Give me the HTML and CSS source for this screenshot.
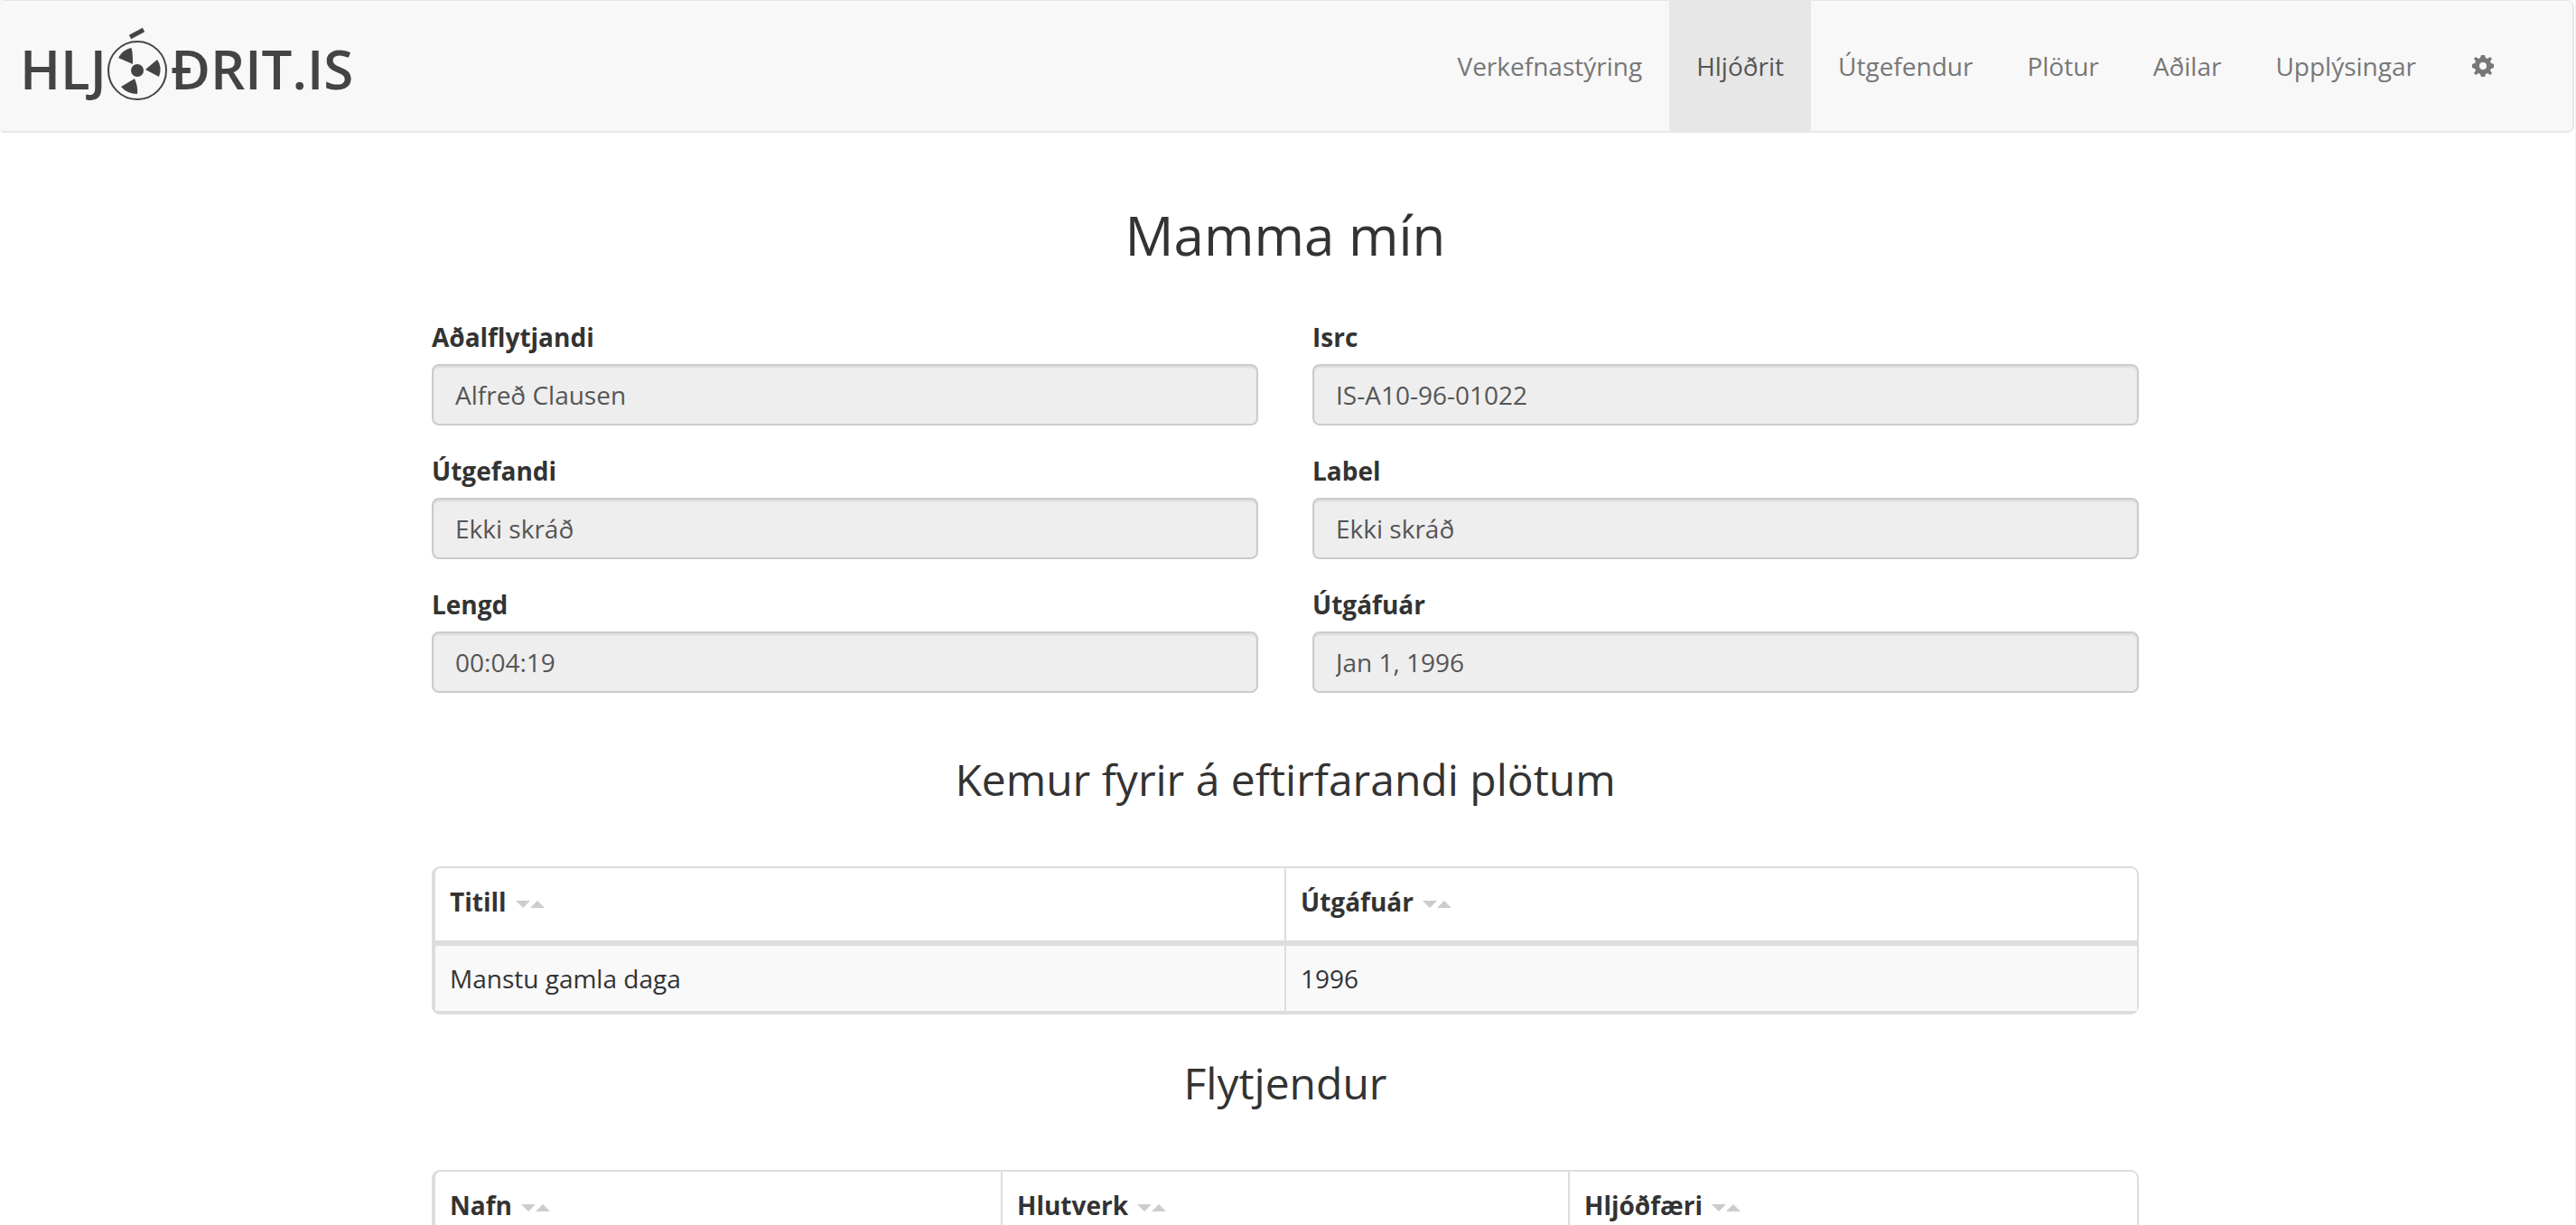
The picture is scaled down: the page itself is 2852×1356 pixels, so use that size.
FILE: index.html
```html
<!DOCTYPE html>
<html lang="is">
<head>
<meta charset="utf-8">
<meta name="viewport" content="width=device-width, initial-scale=1">
<title>Mamma mín - Hljóðrit.is</title>
<link rel="stylesheet" href="styles.css">
</head>
<body>
<header class="navbar">
  <a class="brand" href="#" aria-label="Hljóðrit.is">
    <svg class="logo" viewBox="-10 0 390 90" width="390" height="90">
      <text class="logo-text" x="-5" y="73">HLJ</text>
      <text class="logo-text" x="162" y="73">ÐRIT.IS</text>
      <circle class="logo-ring" cx="125" cy="52" r="32"/>
      <path class="logo-accent" d="M117 15L132 7"/>
      <circle class="logo-fill" cx="125" cy="52" r="7"/>
      <path class="logo-fill" d="M104 38Q109 29 118 27Q120 28 120 45ZM134 51L147 40Q153 48 149 59ZM107 70L122 61Q126 70 125 78Q114 78 107 70Z"/>
    </svg>
  </a>
  <nav class="menu">
    <a class="menu-link" href="#">Verkefnastýring</a>
    <a class="menu-link active" href="#" aria-current="page">Hljóðrit</a>
    <a class="menu-link" href="#">Útgefendur</a>
    <a class="menu-link" href="#">Plötur</a>
    <a class="menu-link" href="#">Aðilar</a>
    <a class="menu-link" href="#">Upplýsingar</a>
    <a class="menu-link" href="#" aria-label="Stillingar">
      <svg class="cog" viewBox="-14 -14 28 28" width="28" height="28">
        <path fill-rule="evenodd" d="M-2 -12H2L3 -9L5 -8L8 -10L10 -8L8 -5L9 -3L12 -2V2L9 3L8 5L10 8L8 10L5 8L3 9L2 12H-2L-3 9L-5 8L-8 10L-10 8L-8 5L-9 3L-12 2V-2L-9 -3L-8 -5L-10 -8L-8 -10L-5 -8L-3 -9ZM0 -4A4 4 0 1 0 0 4A4 4 0 1 0 0 -4Z"/>
      </svg>
    </a>
  </nav>
</header>

<main class="page">
  <div class="container">
    <h1 class="title">Mamma mín</h1>
    <form class="details">
      <div class="field"><label class="label" for="artist">Aðalflytjandi</label><input class="control" id="artist" type="text" value="Alfreð Clausen" readonly></div>
      <div class="field"><label class="label" for="isrc">Isrc</label><input class="control" id="isrc" type="text" value="IS-A10-96-01022" readonly></div>
      <div class="field"><label class="label" for="publisher">Útgefandi</label><input class="control" id="publisher" type="text" value="Ekki skráð" readonly></div>
      <div class="field"><label class="label" for="record-label">Label</label><input class="control" id="record-label" type="text" value="Ekki skráð" readonly></div>
      <div class="field"><label class="label" for="duration">Lengd</label><input class="control" id="duration" type="text" value="00:04:19" readonly></div>
      <div class="field"><label class="label" for="year">Útgáfuár</label><input class="control" id="year" type="text" value="Jan 1, 1996" readonly></div>
    </form>

    <section class="section">
      <h2 class="subtitle">Kemur fyrir á eftirfarandi plötum</h2>
      <table class="table">
        <thead>
          <tr>
            <th scope="col">Titill<svg class="sort" viewBox="0 0 32 8" width="32" height="8"><path d="M0 0H16L8 8ZM16 8H32L24 0Z"/></svg></th>
            <th scope="col">Útgáfuár<svg class="sort" viewBox="0 0 32 8" width="32" height="8"><path d="M0 0H16L8 8ZM16 8H32L24 0Z"/></svg></th>
          </tr>
        </thead>
        <tbody>
          <tr><td>Manstu gamla daga</td><td>1996</td></tr>
        </tbody>
      </table>
    </section>

    <section class="section">
      <h2 class="subtitle">Flytjendur</h2>
      <table class="table">
        <thead>
          <tr>
            <th scope="col">Nafn<svg class="sort" viewBox="0 0 32 8" width="32" height="8"><path d="M0 0H16L8 8ZM16 8H32L24 0Z"/></svg></th>
            <th scope="col">Hlutverk<svg class="sort" viewBox="0 0 32 8" width="32" height="8"><path d="M0 0H16L8 8ZM16 8H32L24 0Z"/></svg></th>
            <th scope="col">Hljóðfæri<svg class="sort" viewBox="0 0 32 8" width="32" height="8"><path d="M0 0H16L8 8ZM16 8H32L24 0Z"/></svg></th>
          </tr>
        </thead>
      </table>
    </section>
  </div>
</main>
</body>
</html>
```
FILE: styles.css
```css
* {
  box-sizing: border-box;
}

html {
  scrollbar-width: none;
}

body {
  margin: 0;
  min-height: 100vh;
  border-right: 1px solid #f1f1f1;
  background: #fff;
  color: #333;
  font: 400 28px/40px "Open Sans", sans-serif;
}

.navbar {
  display: flex;
  justify-content: space-between;
  align-items: stretch;
  margin-right: 1px;
  padding-right: 55px;
  min-height: 147px;
  background: #f8f8f8;
  border: solid #e7e7e7;
  border-width: 1px 2px 2px 0;
  border-radius: 4px 8px 8px 4px;
}

.brand {
  display: flex;
  align-items: flex-start;
  padding: 25px 0 0 17px;
}

.logo {
  display: block;
  overflow: visible;
}

.logo-text {
  font: 600 60px "Open Sans", sans-serif;
  fill: #444;
}

.logo-ring {
  fill: none;
  stroke: #444;
  stroke-width: 2;
}

.logo-accent {
  fill: none;
  stroke: #444;
  stroke-width: 5;
}

.logo-fill {
  fill: #444;
}

.menu {
  display: flex;
  margin: -1px 0 -2px;
}

.menu-link {
  display: flex;
  align-items: center;
  padding: 0 30px 2px;
  color: #777;
  text-decoration: none;
}

.menu-link.active {
  background: #e7e7e7;
  color: #555;
}

.cog {
  fill: #777;
}

.page {
  padding: 80px 35px 0 30px;
}

.container {
  max-width: 1890px;
  margin: 0 auto;
}

.title {
  margin: 0 0 60px;
  font-size: 60px;
  line-height: 66px;
  font-weight: 400;
  text-align: center;
}

.details {
  display: grid;
  grid-template-columns: 1fr 1fr;
  gap: 30px 60px;
  margin-bottom: 69px;
}

.label {
  display: block;
  margin-bottom: 10px;
  font-weight: 700;
}

.control {
  display: block;
  width: 100%;
  height: 68px;
  padding: 0 24px;
  border: 2px solid #ccc;
  border-radius: 8px;
  background: #eee;
  box-shadow: inset 0 2px 2px rgba(0, 0, 0, .075);
  color: #555;
  font: inherit;
  outline: 0;
}

.section {
  margin-bottom: 49px;
}

.subtitle {
  margin: 0 0 70px;
  font-size: 48px;
  line-height: 53px;
  font-weight: 400;
  text-align: center;
}

.table {
  width: 100%;
  table-layout: fixed;
  border-collapse: separate;
  border-spacing: 0;
  border: solid #ddd;
  border-width: 2px 2px 4px 4px;
  border-radius: 9px;
}

.table th,
.table td {
  padding: 16px;
  border-right: 2px solid #ddd;
  text-align: left;
}

.table th {
  padding-top: 17px;
  padding-bottom: 23px;
  border-bottom: 6px solid #ddd;
  font-weight: 700;
}

.table th:last-child,
.table td:last-child {
  border-right: 0;
}

.table td {
  background: #f9f9f9;
}

.sort {
  margin-left: 10px;
  vertical-align: 4px;
  fill: #ccc;
}
```
